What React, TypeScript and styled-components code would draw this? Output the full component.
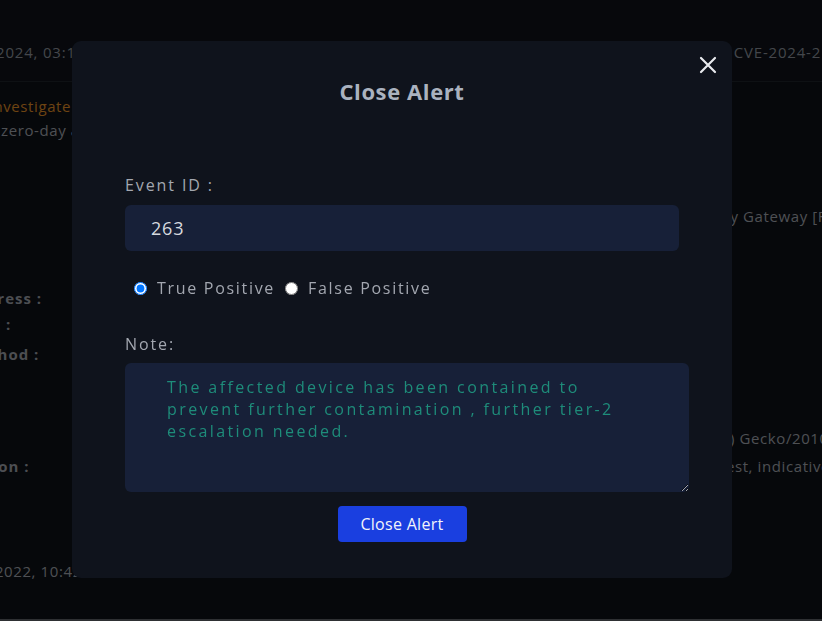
import React from "react";
import styled, { createGlobalStyle } from "styled-components";

const Global = createGlobalStyle`
  html, body { margin: 0; padding: 0; background: #0b0e14; overflow: hidden; }
  body { font-family: "Open Sans", "Liberation Sans", sans-serif; }
  * { box-sizing: border-box; }
`;

const Page = styled.div`
  width: 822px;
  height: 621px;
  overflow: hidden;
  background: #0c0f15;
  border-bottom: 2px solid #55585e;
  position: relative;
`;

const Scroller = styled.div`
  margin-left: -62px;
  width: 1040px;
  display: flex;
  flex-direction: column;
`;

const HeaderRow = styled.div`
  height: 82px;
  padding: 41px 0 0 8px;
  display: flex;
  justify-content: space-between;
  border-bottom: 1px solid #1b1f26;
  background: #0d1016;
  font-size: 15px;
  letter-spacing: 0.8px;
  color: #7c8089;
  line-height: 22px;
  white-space: nowrap;
`;

const HeaderCell = styled.span<{ $offset?: number }>`
  margin-right: ${(p) => p.$offset ?? 0}px;
`;

const Body = styled.div`
  display: flex;
  flex-direction: column;
  font-size: 15px;
  letter-spacing: 0.6px;
  line-height: 24px;
  color: #8e9299;
  white-space: nowrap;
`;

const Line = styled.div<{ $top: number; $indent: number; $tone?: "orange" | "plain" }>`
  margin-top: ${(p) => p.$top}px;
  padding-left: ${(p) => p.$indent}px;
  color: ${(p) => (p.$tone === "orange" ? "#c77c22" : "inherit")};
`;

const Row = styled.div<{ $top: number }>`
  display: grid;
  grid-template-columns: 140px 1fr;
  padding-left: 27px;
  margin-top: ${(p) => p.$top}px;
  align-items: baseline;
`;

const Label = styled.span`
  font-weight: 700;
  letter-spacing: 1px;
  color: #8a8e96;
`;

const Value = styled.span<{ $indent: number }>`
  padding-left: ${(p) => p.$indent}px;
`;

const Overlay = styled.div`
  position: fixed;
  inset: 0;
  background: rgba(0, 0, 0, 0.45);
  display: flex;
  justify-content: center;
  align-items: flex-start;
  padding-top: 41px;
`;

const Modal = styled.div`
  position: relative;
  width: 660px;
  height: 537px;
  margin-left: -18px;
  background: #0f131c;
  border-radius: 9px;
  padding: 0 0 0 53px;
  display: flex;
  flex-direction: column;
`;

const CloseBtn = styled.button`
  position: absolute;
  top: 13px;
  right: 13px;
  width: 22px;
  height: 22px;
  padding: 0;
  border: 0;
  background: transparent;
  color: #e8eaee;
  display: flex;
  align-items: center;
  justify-content: center;
  cursor: pointer;
`;

const Title = styled.h2`
  margin: 36px 0 0 -53px;
  text-align: center;
  font-size: 22px;
  line-height: 28px;
  font-weight: 700;
  color: #aab2bf;
  letter-spacing: 0.6px;
`;

const FieldLabel = styled.label<{ $top: number }>`
  display: block;
  margin-top: ${(p) => p.$top}px;
  font-size: 16px;
  line-height: 22px;
  letter-spacing: 1.9px;
  color: #a3a7b0;
`;

const TextInput = styled.input`
  margin-top: 9px;
  width: 554px;
  height: 46px;
  border: 0;
  border-radius: 6px;
  background: #172038;
  color: #d6d9df;
  font-family: inherit;
  font-size: 18px;
  letter-spacing: 0.8px;
  padding: 0 0 0 26px;
  outline: none;
`;

const RadioRow = styled.div`
  margin-top: 26px;
  display: flex;
  align-items: center;
  padding-left: 9px;
  font-size: 16px;
  letter-spacing: 1.7px;
  color: #a3a7b0;
  line-height: 22px;
`;

const RadioOpt = styled.label`
  display: flex;
  align-items: center;
  gap: 10px;
  margin-right: 10px;
  input { margin: 0; width: 13px; height: 13px; }
`;

const NoteArea = styled.textarea`
  margin-top: 8px;
  width: 564px;
  height: 129px;
  border: 0;
  border-radius: 6px;
  background: #172038;
  color: #1e8c7a;
  font-family: inherit;
  font-size: 16px;
  line-height: 22px;
  letter-spacing: 2.4px;
  padding: 13px 42px 0 42px;
  resize: vertical;
  outline: none;
`;

const SubmitRow = styled.div`
  margin: 14px 0 0 -53px;
  display: flex;
  justify-content: center;
`;

const Submit = styled.button`
  width: 129px;
  height: 36px;
  border: 0;
  border-radius: 4px;
  background: #1a3fe0;
  color: #f2f4fa;
  font-family: inherit;
  font-size: 16px;
  letter-spacing: 0.3px;
  cursor: pointer;
`;

export default function App() {
  return (
    <>
      <Global />
      <Page>
        <Scroller>
          <HeaderRow>
            <span>12/03/2024, 03:15 PM</span>
            <HeaderCell $offset={22}>CVE-2024-21762 exploitation</HeaderCell>
          </HeaderRow>
          <Body>
            <Line $top={12} $indent={51} $tone="orange">investigate immediately</Line>
            <Line $top={0} $indent={63}>zero-day attempt was detected on the perimeter</Line>
            <Row $top={62}>
              <Label></Label>
              <Value $indent={573}>Security Gateway [FW-EDGE-01]</Value>
            </Row>
            <Row $top={58}>
              <Label>Address :</Label>
              <Value $indent={20}>10.12.4.88</Value>
            </Row>
            <Row $top={2}>
              <Label>Port :</Label>
              <Value $indent={20}>443</Value>
            </Row>
            <Row $top={6}>
              <Label>Method :</Label>
              <Value $indent={20}>POST</Value>
            </Row>
            <Row $top={60}>
              <Label></Label>
              <Value $indent={329}>Mozilla/5.0 (X11; Linux x86_64; rv:109.0) Gecko/20100101</Value>
            </Row>
            <Row $top={4}>
              <Label>Action :</Label>
              <Value $indent={109}>Blocked request to the management interface, suspicious post request, indicative of exploit</Value>
            </Row>
            <Line $top={81} $indent={8}>11/28/2022, 10:42 AM</Line>
          </Body>
        </Scroller>
        <Overlay>
          <Modal>
            <CloseBtn aria-label="close">
              <svg width="18" height="18" viewBox="0 0 18 18" fill="none" stroke="currentColor" strokeWidth="2.2" strokeLinecap="round">
                <path d="M2 2 L16 16 M16 2 L2 16" />
              </svg>
            </CloseBtn>
            <Title>Close Alert</Title>
            <FieldLabel $top={69}>Event ID :</FieldLabel>
            <TextInput defaultValue="263" readOnly />
            <RadioRow>
              <RadioOpt>
                <input type="radio" name="verdict" defaultChecked />
                True Positive
              </RadioOpt>
              <RadioOpt>
                <input type="radio" name="verdict" />
                False Positive
              </RadioOpt>
            </RadioRow>
            <FieldLabel $top={34}>Note:</FieldLabel>
            <NoteArea
              readOnly
              defaultValue="The affected device has been contained to prevent further contamination , further tier-2 escalation needed."
            />
            <SubmitRow>
              <Submit>Close Alert</Submit>
            </SubmitRow>
          </Modal>
        </Overlay>
      </Page>
    </>
  );
}
